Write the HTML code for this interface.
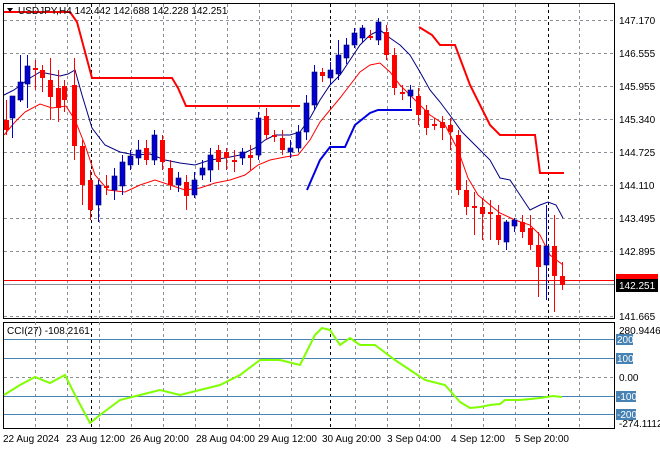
<!DOCTYPE html>
<html><head><meta charset="utf-8"><style>
body{margin:0;background:#fff;width:660px;height:450px;overflow:hidden;font-family:"Liberation Sans",sans-serif;}
svg{position:absolute;left:0;top:0}
text{font-family:"Liberation Sans",sans-serif;font-size:10px;fill:#000}
</style></head><body>
<svg width="660" height="450" viewBox="0 0 660 450">
<rect x="0" y="0" width="660" height="450" fill="#fff"/>
<!-- pane borders -->
<rect x="3.5" y="3.5" width="611" height="315" fill="none" stroke="#000"/>
<rect x="3.5" y="322.5" width="611" height="106" fill="none" stroke="#000"/>
<!-- grid -->
<g stroke="#8a8f96" stroke-dasharray="3,3" stroke-width="1">
<line x1="4" x2="614" y1="20.5" y2="20.5"/><line x1="4" x2="614" y1="53.5" y2="53.5"/>
<line x1="4" x2="614" y1="86.5" y2="86.5"/><line x1="4" x2="614" y1="119.5" y2="119.5"/>
<line x1="4" x2="614" y1="152.5" y2="152.5"/><line x1="4" x2="614" y1="185.5" y2="185.5"/>
<line x1="4" x2="614" y1="218.5" y2="218.5"/><line x1="4" x2="614" y1="251.5" y2="251.5"/>
<line x1="4" x2="614" y1="316.5" y2="316.5"/><line x1="4" x2="614" y1="377.5" y2="377.5"/>
<line x1="35.5" x2="35.5" y1="4" y2="428"/><line x1="67.5" x2="67.5" y1="4" y2="428"/>
<line x1="99.5" x2="99.5" y1="4" y2="428"/><line x1="131.5" x2="131.5" y1="4" y2="428"/>
<line x1="163.5" x2="163.5" y1="4" y2="428"/><line x1="195.5" x2="195.5" y1="4" y2="428"/>
<line x1="227.5" x2="227.5" y1="4" y2="428"/><line x1="259.5" x2="259.5" y1="4" y2="428"/>
<line x1="291.5" x2="291.5" y1="4" y2="428"/><line x1="355.5" x2="355.5" y1="4" y2="428"/>
<line x1="387.5" x2="387.5" y1="4" y2="428"/><line x1="419.5" x2="419.5" y1="4" y2="428"/>
<line x1="451.5" x2="451.5" y1="4" y2="428"/><line x1="483.5" x2="483.5" y1="4" y2="428"/>
<line x1="515.5" x2="515.5" y1="4" y2="428"/><line x1="579.5" x2="579.5" y1="4" y2="428"/>
</g>
<g stroke="#000" stroke-dasharray="3,3" stroke-width="1">
<line x1="91.5" x2="91.5" y1="4" y2="428"/><line x1="330.5" x2="330.5" y1="4" y2="428"/><line x1="548.5" x2="548.5" y1="4" y2="428"/>
</g>
<!-- CCI levels -->
<g stroke="#4682b4" stroke-width="1">
<line x1="4" x2="614" y1="339.5" y2="339.5"/><line x1="4" x2="614" y1="358.5" y2="358.5"/>
<line x1="4" x2="614" y1="396.5" y2="396.5"/><line x1="4" x2="614" y1="414.5" y2="414.5"/>
</g>
<!-- price lines -->
<line x1="4" x2="614" y1="280.5" y2="280.5" stroke="#f00"/>
<line x1="4" x2="614" y1="284.5" y2="284.5" stroke="#8a8f96"/>
<!-- kijun-like steps -->
<polyline fill="none" stroke="#f00" stroke-width="2" points="4,12 70,12 77,22 92,78 172,78 178,88 186,106 300,106"/>
<polyline fill="none" stroke="#f00" stroke-width="2" points="419,27 432,35 440,45 455,45 470,85 490,125 500,135 535,135 540,173 564,173"/>
<polyline fill="none" stroke="#0000e0" stroke-width="2" points="307,190 320,160 330,147 345,147 355,125 370,113 378,110 412,110"/>
<!-- thin MAs -->
<polyline fill="none" stroke="#000080" stroke-width="1" points="4,95 14,90 22,84 30,78 40,72 50,74 60,76 68,74 75,70 82,95 92,128 105,145 120,152 135,155 150,154 165,160 180,163 195,165 210,160 225,158 240,155 255,148 265,140 275,135 290,135 300,132 310,118 320,100 330,85 340,75 350,60 360,45 370,35 380,30 390,38 400,45 410,55 420,72 430,90 440,102 452,118 462,132 475,145 490,160 500,178 510,180 520,195 530,210 540,205 548,202 556,205 563,218"/>
<polyline fill="none" stroke="#f00" stroke-width="1" points="4,135 15,122 25,112 40,104 52,108 66,106 75,120 85,145 95,175 108,190 125,192 140,185 155,180 170,185 185,190 200,188 215,183 230,180 245,175 258,165 270,160 285,157 298,155 310,140 320,122 330,110 340,98 350,85 360,72 370,65 380,63 390,72 400,85 410,95 420,105 430,115 445,125 458,150 468,178 478,195 490,205 500,213 515,220 530,225 540,235 550,255 563,265"/>
<!-- candles -->
<g id="c"></g>
<!-- CCI -->
<polyline fill="none" stroke="#7fff00" stroke-width="2" points="4,395 20,385 35,377 50,383 65,375 75,395 90,423 100,415 120,400 140,395 160,390 180,395 200,390 220,385 240,375 260,360 280,360 300,365 315,335 322,328 330,330 340,345 350,338 360,345 375,345 395,360 410,370 425,380 445,385 460,402 470,408 480,407 490,405 500,404 505,400 520,400 540,398 553,396 562,397"/>
<!-- labels -->
<g>
<text x="619" y="24">147.170</text><text x="619" y="57">146.555</text><text x="619" y="90">145.955</text>
<text x="619" y="123">145.340</text><text x="619" y="156">144.725</text><text x="619" y="189">144.110</text>
<text x="619" y="222">143.495</text><text x="619" y="255">142.895</text><text x="619" y="320">141.665</text>
<rect x="616" y="274" width="42" height="10" fill="#f00"/>
<rect x="616" y="279" width="42" height="13" fill="#000"/>
<text x="619" y="289" style="fill:#fff">142.251</text>
<text x="619" y="334">280.9446</text>
<rect x="616" y="334" width="17" height="11" fill="#4682b4"/><text x="617" y="343" style="fill:#fff">200</text>
<rect x="616" y="353" width="17" height="11" fill="#4682b4"/><text x="617" y="362" style="fill:#fff">100</text>
<text x="619" y="381">0.00</text>
<rect x="616" y="391" width="20" height="11" fill="#4682b4"/><text x="617" y="400" style="fill:#fff">-100</text>
<rect x="616" y="409" width="20" height="11" fill="#4682b4"/><text x="617" y="418" style="fill:#fff">-200</text>
<text x="619" y="427">-274.1112</text>
<text x="3" y="442">22 Aug 2024</text><text x="66" y="442">23 Aug 12:00</text><text x="130" y="442">26 Aug 20:00</text>
<text x="196" y="442">28 Aug 04:00</text><text x="258" y="442">29 Aug 12:00</text><text x="322" y="442">30 Aug 20:00</text>
<text x="387" y="442">3 Sep 04:00</text><text x="451" y="442">4 Sep 12:00</text><text x="515" y="442">5 Sep 20:00</text>
<text x="7" y="334">CCI(27) -108.2161</text>
<path d="M7,8 L13,8 L10,12 Z" fill="#000"/>
<text x="18" y="14">USDJPY,H4  142.442 142.688 142.228 142.251</text>
</g>
</svg>
<script>
var d=[[6,120,130,100,135],[12,118,96,100,138],[20,100,82,55,102],[27,84,66,55,108],[35,68,70,60,90],[42,70,78,65,92],[50,80,97,58,120],[58,88,108,70,122],[64,86,100,80,112],[74,85,146,58,160],[82,146,185,140,205],[90,180,210,170,220],[98,205,185,180,222],[106,186,186,175,195],[114,190,176,168,200],[122,186,162,155,195],[130,165,156,150,170],[138,158,150,140,165],[146,148,160,140,165],[154,160,135,130,165],[162,140,162,135,170],[170,168,185,160,190],[178,185,178,172,192],[186,182,196,175,210],[194,195,180,172,198],[202,175,168,160,180],[210,170,155,148,182],[218,150,162,145,170],[226,152,158,148,170],[234,160,162,150,172],[242,158,152,148,165],[250,155,158,145,170],[258,155,118,112,160],[266,116,135,108,140],[274,135,136,130,142],[282,138,150,130,155],[290,152,148,140,158],[298,148,132,125,152],[306,132,103,95,140],[314,105,72,65,110],[322,72,76,68,82],[330,78,70,62,84],[338,74,55,40,80],[346,58,45,38,64],[354,45,33,28,48],[362,38,28,25,42],[370,36,36,30,40],[378,40,22,18,45],[386,32,55,25,60],[394,55,88,48,95],[402,92,92,85,100],[410,96,90,85,108],[418,96,115,88,125],[426,110,128,105,135],[434,124,124,118,130],[442,122,128,116,140],[450,125,132,118,150],[458,135,190,130,195],[466,190,207,180,215],[474,206,206,192,235],[482,207,214,198,240],[490,212,213,200,240],[498,215,240,205,245],[506,242,222,220,250],[514,226,220,218,232],[522,222,232,215,238],[530,228,245,215,250],[538,245,267,232,297],[546,265,246,205,300],[554,246,276,215,312],[562,276,285,262,290]];
var s='';d.forEach(function(c){var up=c[2]<c[1];var col=up?'#0000d0':'#f00';var t=Math.min(c[1],c[2]),h=Math.max(2,Math.abs(c[1]-c[2]));
s+='<line x1="'+(c[0]+.5)+'" x2="'+(c[0]+.5)+'" y1="'+c[3]+'" y2="'+c[4]+'" stroke="'+col+'"/>';
s+='<rect x="'+(c[0]-2)+'" y="'+t+'" width="5" height="'+h+'" fill="'+col+'"'+(up?' stroke="#000060" stroke-width=".6"':'')+'/>';});
document.getElementById('c').innerHTML=s;
</script>
</body></html>
